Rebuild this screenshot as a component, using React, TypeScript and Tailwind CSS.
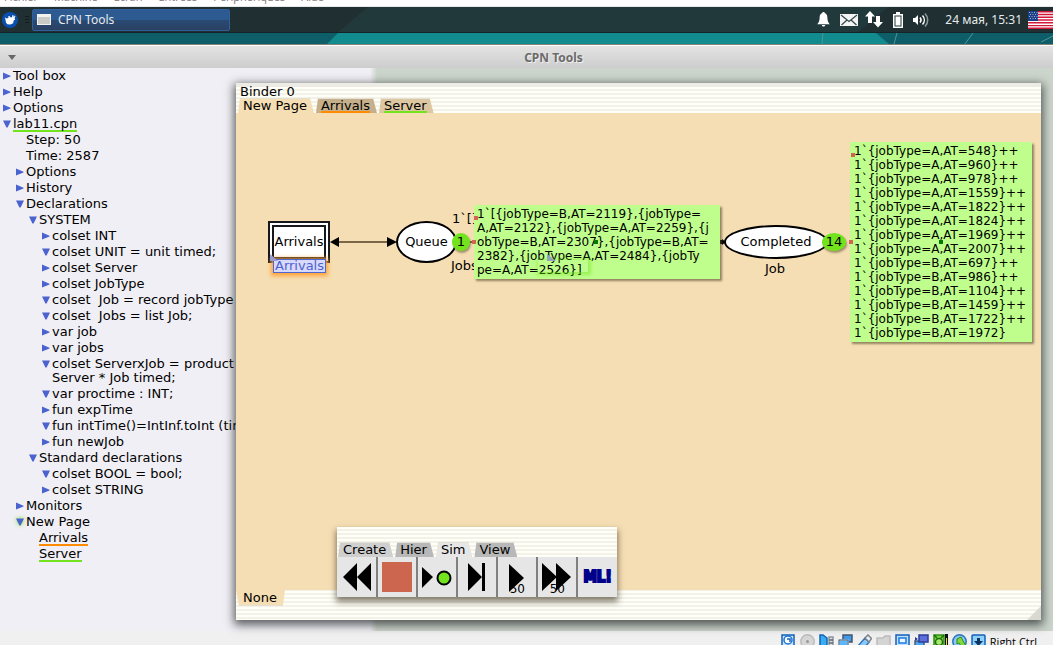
import type { ReactNode } from "react";

type Underline = "green" | "orange";
type TreeItem = {
  label: string;
  depth: number;
  state?: "open" | "closed";
  underline?: Underline;
  glow?: boolean;
};

const tree: TreeItem[] = [
  { label: "Tool box", depth: 0, state: "closed" },
  { label: "Help", depth: 0, state: "closed" },
  { label: "Options", depth: 0, state: "closed" },
  { label: "lab11.cpn", depth: 0, state: "open", underline: "green" },
  { label: "Step: 50", depth: 1 },
  { label: "Time: 2587", depth: 1 },
  { label: "Options", depth: 1, state: "closed" },
  { label: "History", depth: 1, state: "closed" },
  { label: "Declarations", depth: 1, state: "open" },
  { label: "SYSTEM", depth: 2, state: "open" },
  { label: "colset INT", depth: 3, state: "closed" },
  { label: "colset UNIT = unit timed;", depth: 3, state: "open" },
  { label: "colset Server", depth: 3, state: "closed" },
  { label: "colset JobType", depth: 3, state: "closed" },
  { label: "colset  Job = record jobType :", depth: 3, state: "open" },
  { label: "colset  Jobs = list Job;", depth: 3, state: "open" },
  { label: "var job", depth: 3, state: "closed" },
  { label: "var jobs", depth: 3, state: "closed" },
  { label: "colset ServerxJob = product\nServer * Job timed;", depth: 3, state: "open" },
  { label: "var proctime : INT;", depth: 3, state: "open" },
  { label: "fun expTime", depth: 3, state: "closed" },
  { label: "fun intTime()=IntInf.toInt (time", depth: 3, state: "open" },
  { label: "fun newJob", depth: 3, state: "closed" },
  { label: "Standard declarations", depth: 2, state: "open" },
  { label: "colset BOOL = bool;", depth: 3, state: "open" },
  { label: "colset STRING", depth: 3, state: "closed" },
  { label: "Monitors", depth: 1, state: "closed" },
  { label: "New Page", depth: 1, state: "open", glow: true },
  { label: "Arrivals", depth: 2, underline: "orange" },
  { label: "Server", depth: 2, underline: "green" },
];

const indent = ["pl-[3px]", "pl-4", "pl-[29px]", "pl-[42px]"];

const queueMarking = [
  "1`[{jobType=B,AT=2119},{jobType=",
  "A,AT=2122},{jobType=A,AT=2259},{j",
  "obType=B,AT=2307},{jobType=B,AT=",
  "2382},{jobType=A,AT=2484},{jobTy",
  "pe=A,AT=2526}]",
].join("\n");

const completedMarking = [
  "1`{jobType=A,AT=548}++",
  "1`{jobType=A,AT=960}++",
  "1`{jobType=A,AT=978}++",
  "1`{jobType=A,AT=1559}++",
  "1`{jobType=A,AT=1822}++",
  "1`{jobType=A,AT=1824}++",
  "1`{jobType=A,AT=1969}++",
  "1`{jobType=A,AT=2007}++",
  "1`{jobType=B,AT=697}++",
  "1`{jobType=B,AT=986}++",
  "1`{jobType=B,AT=1104}++",
  "1`{jobType=B,AT=1459}++",
  "1`{jobType=B,AT=1722}++",
  "1`{jobType=B,AT=1972}",
].join("\n");

const stripes =
  "bg-[repeating-linear-gradient(to_bottom,#fffff7_0px,#fffff7_2px,#f2f2e9_2px,#f2f2e9_4px)]";

function TreeRow({ item }: { item: TreeItem }) {
  return (
    <li className={`flex pt-px ${indent[item.depth]}`}>
      <button type="button" className="flex items-start text-left">
        <span className="flex h-[14px] w-[10px] shrink-0 items-center">
          {item.state && (
            <svg
              viewBox="0 0 8 8"
              className={`size-2 overflow-visible ${item.glow ? "drop-shadow-[0_0_2px_#73e31d]" : ""}`}
              fill="#4a63cf"
            >
              <path d={item.state === "open" ? "M0 0.5H8L4.6 7.5H3.4Z" : "M0 0.5L7.5 3.8V4.4L0 7.5Z"} />
            </svg>
          )}
        </span>
        <span
          className={
            item.underline === "green"
              ? "h-[15px] border-b-2 border-[#73e31d]"
              : item.underline === "orange"
                ? "h-[15px] border-b-2 border-[#ff8c00]"
                : "pb-px"
          }
        >
          {item.label}
        </span>
      </button>
    </li>
  );
}

function Tab({ label, tone, underline }: { label: string; tone: string; underline?: Underline }) {
  return (
    <button
      type="button"
      className={`h-[15px] border-t border-[#e4e0d4] pr-[7px] pl-[5px] [clip-path:polygon(2px_0,calc(100%-4px)_0,100%_100%,0_100%)] ${tone}`}
    >
      <span
        className={
          underline === "green"
            ? "block h-[14px] border-b-2 border-[#73e31d]"
            : underline === "orange"
              ? "block h-[14px] border-b-2 border-[#ff8c00]"
              : "block h-[14px]"
        }
      >
        {label}
      </span>
    </button>
  );
}

function SimButton({ label, children, count }: { label: string; children?: ReactNode; count?: string }) {
  return (
    <button
      type="button"
      aria-label={label}
      className="relative flex size-10 items-center justify-center border-r-2 border-[#808080] bg-[#e6e6e6]"
    >
      <svg viewBox="0 0 38 38" className="size-[38px]">
        {children}
      </svg>
      {count && <span className="absolute right-[11px] bottom-px text-xs leading-[14px]">{count}</span>}
    </button>
  );
}

function Marking({ text, place }: { text: string; place: string }) {
  return (
    <pre
      className={`absolute bg-[#bffe8c] font-[inherit] text-xs leading-[14px] shadow-[2px_2px_2px_rgba(80,70,40,0.6)] ${place}`}
    >
      {text}
    </pre>
  );
}

function SystemPanel() {
  return (
    <header className="relative flex h-[25px] items-center bg-[linear-gradient(140deg,#1f2f32_0_34%,#21393a_34%_82%,#1f2f32_82%)] pl-[2px] font-['Noto_Sans',sans-serif] text-xs text-[#e6eaea]">
      <svg viewBox="0 0 16 16" className="size-4">
        <circle cx="8" cy="8" r="8" fill="#0a4fb0" />
        <path
          d="M3 5.500l2 1 1.500-.7L6.300 4l1.400.3 1 1.200 1.300-.2L10.500 3l.9.200.3 1.900 1.300-1.600.4.700-.9 2 .700 1.200-1.500 1.200-.600 2.600-2.600 1.300-3.200-.200-1.200-1.600L3.500 8z"
          fill="#fff"
        />
      </svg>
      <svg viewBox="0 0 4 10" className="ml-[7px] h-[10px] w-1" fill="#121d1f">
        <path d="M0 1h4v1H0zM0 4h4v1H0zM0 7h4v1H0z" />
      </svg>
      <button
        type="button"
        className="ml-[3px] flex h-[22px] w-[198px] items-center gap-[7px] rounded-[2px] border border-[#2f5f9c] bg-[linear-gradient(#2d5a90_0_50%,#294a74_50%,#2a4162)] pl-1"
      >
        <svg viewBox="0 0 14 11" className="h-[11px] w-[14px]">
          <path d="M0 0h14v11H0z" fill="#f1f2ef" />
          <path d="M1 3h12v7H1z" fill="#c9ccc6" />
        </svg>
        CPN Tools
      </button>
      <div className="ml-auto flex items-center">
        <svg viewBox="0 0 13 15" className="mr-[10px] h-[15px] w-[13px]" fill="#fff">
          <path d="M6.5 0c.9 0 1.2.6 1.2 1.1C9.7 1.7 10.3 3.4 10.4 6c.1 3 .8 4.600 2.400 6.200H.2C1.800 10.600 2.500 9 2.600 6 2.700 3.400 3.300 1.700 5.300 1.100 5.300.6 5.600 0 6.500 0zM4.800 13h3.400c-.2 1-.9 1.500-1.700 1.500S5 14 4.800 13z" />
        </svg>
        <svg viewBox="0 0 18 12" className="mr-[7px] h-3 w-[18px]">
          <path d="M0 0h18v12H0z" fill="#f4f4f4" />
          <path d="M1 1l8 6.500L17 1M1.500 11l5.500-5M16.500 11L11 6" fill="none" stroke="#33484a" strokeWidth="1.200" />
        </svg>
        <svg viewBox="0 0 18 17" className="mr-[10px] h-[17px] w-[18px]" fill="#fff">
          <path d="M5 0l5 5.500H7V12H3V5.500H0zM11 5h4v6h3l-5 5.500L8 11h3z" />
        </svg>
        <svg viewBox="0 0 10 16" className="mr-[10px] h-4 w-[10px]">
          <path d="M3 0h4v2h3v14H0V2h3z" fill="#fff" />
          <path d="M1.500 3.500h7v11h-7z" fill="#22383a" />
          <path d="M2.500 4.500h5v9h-5z" fill="#fff" />
        </svg>
        <svg viewBox="0 0 16 14" className="mr-4 h-[14px] w-4" fill="none">
          <path d="M0 5h2l3-3v10L2 9H0z" fill="#fff" />
          <path d="M7 4.500c1.300 1.500 1.300 3.500 0 5" stroke="#fff" strokeWidth="1.500" />
          <path d="M9.500 2.500c2.400 2.600 2.400 6.400 0 9" stroke="#fff" strokeWidth="1.500" />
          <path d="M12 .5c3.600 3.700 3.600 9.300 0 13" stroke="#8e9c9c" strokeWidth="1.500" />
        </svg>
        <time className="mr-[6px]">24 мая, 15:31</time>
        <svg viewBox="0 0 25 18" className="h-[18px] w-[25px]">
          <path d="M0 0h25v18H0z" fill="#fff" />
          <path
            d="M0 .7h25M0 3.500h25M0 6.300h25M0 9h25M0 11.800h25M0 14.600h25M0 17.300h25"
            stroke="#d3173c"
            strokeWidth="1.400"
          />
          <path d="M0 0h10v10H0z" fill="#1b3f86" />
          <path
            d="M1 1.500h9M2 3.500h8M1 5.500h9M2 7.500h8"
            stroke="#9fb2d6"
            strokeWidth="1"
            strokeDasharray="1 1.500"
          />
        </svg>
      </div>
    </header>
  );
}

function Wallpaper() {
  return (
    <div className="h-3 shrink-0 overflow-hidden border-t border-[#152527] bg-[#0d5e69]">
      <svg viewBox="0 0 1053 11" preserveAspectRatio="none" className="h-full w-full">
        <path d="M338 0H876L889 11H327Z" fill="#118b8d" />
        <path d="M823 0l-1 11M897 0l-3 11M973 0l-8 11M1053 3l-12 6" stroke="#4f9497" strokeWidth="1" fill="none" />
      </svg>
    </div>
  );
}

function Diagram() {
  return (
    <section className="relative min-h-0 flex-1 bg-[#f5deb3]">
      <svg className="absolute inset-0 h-full w-full">
        <path d="M100 129H155M228 129H240M484 129H490" stroke="#7a6747" strokeWidth="2" />
        <path d="M94 129l9-5v10zM161 129l-10-5v10z" fill="#000" />
        <path d="M483 127h3v-1l4 3-4 3v-1h-3z" fill="#000" />
      </svg>
      <div className="absolute top-[108px] left-8 h-[42px] w-[62px] border-2 border-[#16181c] bg-white p-[2px]">
        <div className="flex h-full items-center justify-center border-2 border-[#16181c]">Arrivals</div>
      </div>
      <div className="absolute top-[146px] left-[37px] flex h-[14px] w-[53px] items-center justify-center border border-[#4f68cf] bg-[#d9d9fb] text-[#4a63cf] shadow-[0_1px_4px_2px_#ffa53c]">
        Arrivals
      </div>
      <svg className="absolute top-[141px] left-[34px] size-2" viewBox="0 0 8 8">
        <path d="M0 0L8 7H0z" fill="#9a9ad0" />
      </svg>
      <div className="absolute top-[108px] left-40 flex h-[42px] w-[61px] items-center justify-center rounded-[50%] border-2 border-black bg-white">
        Queue
      </div>
      <span className="absolute top-[99px] left-[216px]">1`[]</span>
      <span className="absolute top-[146px] left-[215px]">Jobs</span>
      <div className="absolute top-[120px] left-[216px] flex size-[18px] items-center justify-center rounded-[50%] bg-[#73e31d] shadow-[1px_2px_2px_rgba(80,70,40,0.5)]">
        1
      </div>
      <Marking text={queueMarking} place="top-[92px] left-[238px] h-[74px] w-[246px] pt-[2px] pl-[3px]" />
      <svg className="absolute top-[92px] left-[236px] h-[75px] w-[140px]" viewBox="0 0 140 75">
        <path d="M2 11h4v4H2zM0 35h4v4H0z" fill="#d0664f" />
        <path d="M122 35h4v4h-4z" fill="#007a00" />
        <path d="M75 49l9 7h-9z" fill="#9a9ad0" />
      </svg>
      <div className="absolute top-[147px] left-[302px] h-3 w-[50px] shadow-[1px_1px_3px_2px_rgba(115,227,29,0.45)]" />
      <div className="absolute top-[112px] left-[488px] flex h-[34px] w-[104px] items-center justify-center rounded-[50%] border-2 border-black bg-white">
        Completed
      </div>
      <div className="absolute top-[120px] left-[586px] flex h-[18px] w-6 items-center justify-center rounded-[50%] bg-[#73e31d] shadow-[1px_2px_2px_rgba(80,70,40,0.5)]">
        14
      </div>
      <span className="absolute top-[149px] left-[529px]">Job</span>
      <Marking text={completedMarking} place="top-[29px] left-[614px] h-[200px] w-[182px] pt-[2px] pl-[4px]" />
      <svg className="absolute top-[29px] left-[612px] h-[200px] w-[100px]" viewBox="0 0 100 200">
        <path d="M3 11h4v4H3zM1 98h4v4H1z" fill="#d0664f" />
        <path d="M91 98h4v4h-4z" fill="#007a00" />
      </svg>
    </section>
  );
}

function SimPalette() {
  return (
    <section
      aria-label="Simulation tools"
      className="absolute bottom-[23px] left-[101px] bg-[#fffff7] shadow-[0_4px_6px_1px_rgba(60,50,30,0.6)]"
    >
      <div className={`pt-[15px] ${stripes}`}>
        <nav className="flex gap-[2px] pl-px">
          <Tab label="Create" tone="bg-[#cfcfcf]" />
          <Tab label="Hier" tone="bg-[#b8b8b8]" />
          <Tab label="Sim" tone="bg-[#e6e6e6]" />
          <Tab label="View" tone="bg-[#b8b8b8]" />
        </nav>
      </div>
      <div className="flex bg-[#e6e6e6] pl-px">
        <SimButton label="Rewind">
          <path d="M19 5v28L5 19zM33 5v28L19 19z" />
        </SimButton>
        <SimButton label="Stop">
          <path d="M4 4h30v30H4z" fill="#cc664e" />
        </SimButton>
        <SimButton label="Execute transition">
          <path d="M4 9l11 10L4 30z" />
          <circle cx="26" cy="20" r="6.500" fill="#73e31d" stroke="#000" strokeWidth="2" />
        </SimButton>
        <SimButton label="Single step">
          <path d="M10 5l14 14-14 14zM24 5h3v28h-3z" />
        </SimButton>
        <SimButton label="Play" count="50">
          <path d="M11 6l15 14-15 14z" />
        </SimButton>
        <SimButton label="Fast forward" count="50">
          <path d="M4 5l15 14L4 33zM18 5l15 14-15 14z" />
        </SimButton>
        <button
          type="button"
          className="flex h-10 w-[39px] items-center justify-center font-['DejaVu_Sans_Condensed','DejaVu_Sans',sans-serif] text-[15px] font-bold text-[#00008b] [-webkit-text-stroke:2px_#00008b]"
        >
          ML!
        </button>
      </div>
    </section>
  );
}

function Binder() {
  return (
    <div
      className={`relative mt-[15px] mr-3 mb-[11px] flex min-w-0 flex-1 flex-col shadow-[0_3px_9px_2px_rgba(40,45,45,0.75)] ${stripes}`}
    >
      <h2 className="h-[15px] border-t-4 border-[#ecece4] pl-1">
        <span className="block h-[11px] leading-[10px]">Binder 0</span>
      </h2>
      <nav className="flex gap-[2px] pl-[2px]">
        <Tab label="New Page" tone="bg-[#f5deb3]" />
        <Tab label="Arrivals" tone="bg-[#c6b08b]" underline="orange" />
        <Tab label="Server" tone="bg-[#dcc7a0]" underline="green" />
      </nav>
      <Diagram />
      <footer className="flex h-[30px] shrink-0 items-start justify-between">
        <p className="h-4 border-b border-[#e4e0d4] bg-[#f5deb3] pt-px pr-[8px] pl-[7px] [clip-path:polygon(0_0,100%_0,calc(100%-2px)_100%,3px_100%)]">
          None
        </p>
        <svg viewBox="0 0 14 14" className="size-[14px] self-end">
          <path d="M14 0v14H0z" fill="#d9d9d2" />
        </svg>
      </footer>
      <SimPalette />
    </div>
  );
}

function StatusIcon({ children }: { children: ReactNode }) {
  return (
    <svg viewBox="0 0 15 15" className="size-[15px] shrink-0" strokeWidth="1.500">
      {children}
    </svg>
  );
}

function StatusBar() {
  return (
    <footer className="flex h-[14px] shrink-0 items-start justify-end gap-1 overflow-hidden bg-[#f0f0f0] pt-[3px] pr-4 font-['Open_Sans',sans-serif] text-[11px] leading-[15px]">
      <StatusIcon>
        <rect x="1" y="1" width="12" height="14" fill="#cfe6ff" stroke="#1561b8" />
        <circle cx="7" cy="6" r="4" fill="#fff" stroke="#1b74d6" />
        <path d="M6 5h3v3" fill="none" stroke="#1561b8" />
      </StatusIcon>
      <StatusIcon>
        <circle cx="7.500" cy="7.500" r="6.700" fill="#d6d6d6" stroke="#bdbdbd" />
        <circle cx="7.500" cy="7.500" r="1.500" fill="#999" />
      </StatusIcon>
      <StatusIcon>
        <path d="M1 1h3l4 3v11H5L1 11z" fill="#37aef0" stroke="#1561b8" />
        <path d="M10 3h4v12h-4z" fill="#d9dde0" stroke="#8c959c" />
        <path d="M10 6h4M10 9h4" stroke="#5f6a72" />
      </StatusIcon>
      <StatusIcon>
        <rect x="5" y="1" width="9" height="7" fill="#3b9cf0" stroke="#46566b" />
        <rect x="1" y="6" width="9" height="7" fill="#5ab6ff" stroke="#e4eefa" />
        <rect x="1" y="6" width="9" height="7" fill="none" stroke="#36506f" strokeWidth="1" />
      </StatusIcon>
      <StatusIcon>
        <path d="M1 12l7-8 4 4-6 8H2z" fill="#8cc9fa" stroke="#2b75bd" />
        <path d="M8 4l3-3 3.500 3.500L12 8z" fill="#eef1f3" stroke="#7b858d" />
      </StatusIcon>
      <StatusIcon>
        <path d="M1 4h6l2-2h5v12H1z" fill="#d4d4d4" stroke="#bcbcbc" />
      </StatusIcon>
      <StatusIcon>
        <rect x="1" y="1" width="13" height="14" fill="#bfe1ff" stroke="#1561b8" />
        <rect x="4" y="4" width="7" height="5" fill="#eaf5ff" stroke="#1b7be0" />
      </StatusIcon>
      <StatusIcon>
        <rect x="1" y="7" width="9" height="7" fill="#4aa9f5" stroke="#4a5d78" />
        <path d="M5 1h9v7H5z" fill="#5b71d8" stroke="#2c3c9b" />
        <path d="M1 3l3 2-3 2z" fill="#2c3c9b" />
      </StatusIcon>
      <StatusIcon>
        <rect x="1" y="1" width="10" height="14" fill="#7bd63b" stroke="#2f8f16" />
        <circle cx="6" cy="8" r="3.500" fill="#a5ea6b" stroke="#1e6e10" />
        <path d="M1 1l3 3M11 1l-3 3" stroke="#1e6e10" />
        <path d="M12 0h3v15h-3z" fill="#111" />
        <path d="M13 4h1v11h-1z" fill="#f1e122" />
      </StatusIcon>
      <StatusIcon>
        <circle cx="7.500" cy="7.500" r="6.700" fill="#8cc6f5" stroke="#2a78b8" />
        <path d="M5 5l4-2 1 2 4 7-3 3-4-6-2 1z" fill="#83d63e" stroke="#2f8f16" strokeWidth="1" />
      </StatusIcon>
      <StatusIcon>
        <rect x="1" y="1" width="13" height="14" rx="1" fill="#8fd0fb" stroke="#1561b8" />
        <path d="M6 4h3v3h3l-4.500 5L3 7h3z" fill="#0c3464" />
      </StatusIcon>
      <span>Right Ctrl</span>
    </footer>
  );
}

export default function App() {
  return (
    <div className="flex h-screen flex-col overflow-hidden bg-[#ccd5cc] font-['DejaVu_Sans',sans-serif] text-[13px] leading-[14px] text-black">
      <nav className="flex h-[7px] shrink-0 items-end gap-4 overflow-hidden border-b border-[#e8e8e8] bg-white pb-px pl-1 font-['Open_Sans',sans-serif] text-[11px] leading-4 text-[#777]">
        {["Fichier", "Machine", "Écran", "Entrées", "Périphériques", "Aide"].map((name) => (
          <button key={name} type="button">
            {name}
          </button>
        ))}
      </nav>
      <SystemPanel />
      <Wallpaper />
      <div className="relative flex h-6 shrink-0 items-center justify-center border-t border-[#858078] bg-[linear-gradient(#fff_0_1px,#e3e3e3_1px,#cdcdcd)] pt-[2px] pl-[54px] font-['Noto_Sans',sans-serif] text-xs font-bold text-[#6b6b6b] [text-shadow:1px_1px_0_#f0f0f0]">
        <button type="button" aria-label="Window menu" className="absolute left-2">
          <svg viewBox="0 0 8 5" className="h-[5px] w-2" fill="#666">
            <path d="M0 0h8L4 5z" />
          </svg>
        </button>
        <h1>CPN Tools</h1>
      </div>
      <main className="flex min-h-0 flex-1 bg-[linear-gradient(to_right,#f0eff5_370px,#ccd5cc_377px)]">
        <aside className="w-[236px] shrink-0 overflow-hidden">
          <ul className="whitespace-pre">
            {tree.map((item, i) => (
              <TreeRow key={i} item={item} />
            ))}
          </ul>
        </aside>
        <Binder />
      </main>
      <StatusBar />
    </div>
  );
}
